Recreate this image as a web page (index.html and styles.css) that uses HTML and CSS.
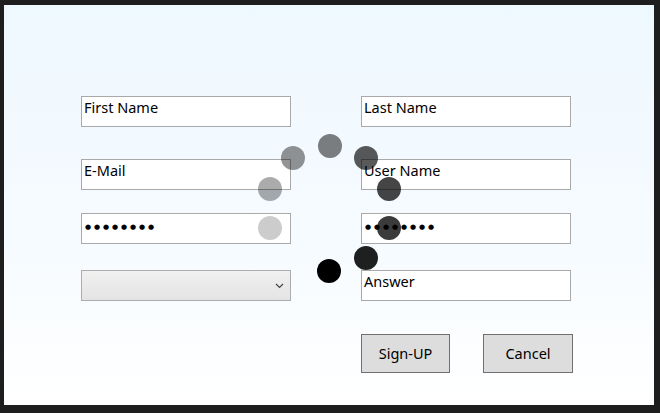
FILE: index.html
```html
<!DOCTYPE html>
<html>
<head>
<meta charset="utf-8">
<link rel="stylesheet" href="styles.css">
</head>
<body>
<div class="frame">
  <div class="panel">
    <div class="form">
      <div class="row row1">
        <div class="box">First Name</div>
        <div class="box">Last Name</div>
      </div>
      <div class="row row2">
        <div class="box">E-Mail</div>
        <div class="box">User Name</div>
      </div>
      <div class="row row3">
        <div class="box pw">●●●●●●●●</div>
        <div class="box pw">●●●●●●●●</div>
      </div>
      <div class="row row4">
        <div class="combo">
          <svg class="chev" width="9" height="6" viewBox="0 0 9 6"><polyline points="1,1 4.5,4.5 8,1" fill="none" stroke="#444" stroke-width="1.2"/></svg>
        </div>
        <div class="box">Answer</div>
      </div>
      <div class="row buttons">
        <div class="btn signup">Sign-UP</div>
        <div class="btn cancel">Cancel</div>
      </div>
    </div>
    <div class="dot" style="left:314px;top:129px;background:rgba(0,0,0,0.5)"></div>
    <div class="dot" style="left:277px;top:141px;background:rgba(0,0,0,0.42)"></div>
    <div class="dot" style="left:350px;top:141px;background:rgba(0,0,0,0.65)"></div>
    <div class="dot" style="left:254px;top:172px;background:rgba(0,0,0,0.33)"></div>
    <div class="dot" style="left:373px;top:172px;background:rgba(0,0,0,0.73)"></div>
    <div class="dot" style="left:254px;top:211px;background:rgba(0,0,0,0.2)"></div>
    <div class="dot" style="left:373px;top:211px;background:rgba(0,0,0,0.77)"></div>
    <div class="dot" style="left:350px;top:241px;background:rgba(0,0,0,0.88)"></div>
    <div class="dot" style="left:313px;top:254px;background:rgba(0,0,0,1)"></div>
  </div>
</div>
</body>
</html>
```

FILE: styles.css
```css
* { box-sizing: border-box; }
html, body { margin: 0; padding: 0; }
body {
  width: 660px;
  height: 413px;
  background: #1e1e1e;
  font-family: "Noto Sans", "Open Sans", sans-serif;
  font-size: 14px;
  color: #000;
  overflow: hidden;
}
.frame {
  width: 660px;
  height: 413px;
  padding: 5px 6px 8px 4px;
}
.panel {
  position: relative;
  width: 100%;
  height: 100%;
  background: linear-gradient(to bottom, #eef8ff 0%, #f6fbff 60%, #ffffff 100%);
  overflow: hidden;
}
.form {
  padding: 91px 0 0 77px;
  display: flex;
  flex-direction: column;
}
.row {
  display: flex;
  gap: 70px;
}
.row2 { margin-top: 32px; }
.row3 { margin-top: 23px; }
.row4 { margin-top: 26px; }
.buttons { margin-top: 33px; padding-left: 280px; gap: 33px; }
.box {
  width: 210px;
  height: 31px;
  background: #fff;
  border: 1px solid #a9a9a9;
  padding: 1px 0 0 2px;
  line-height: 18px;
  font-size: 14.5px;
  white-space: nowrap;
}
.pw {
  font-family: "DejaVu Sans", sans-serif;
  font-size: 7px;
  letter-spacing: 2.9px;
  line-height: 27px;
  padding-top: 0;
  padding-left: 3px;
}
.combo {
  width: 210px;
  height: 31px;
  border: 1px solid #acacac;
  background: linear-gradient(to bottom, #f0f0f0, #e4e4e4);
  display: flex;
  align-items: center;
  justify-content: flex-end;
  padding-right: 6px;
}
.chev { display: block; margin-top: 1px; }
.btn {
  height: 39px;
  background: #dddddd;
  border: 1px solid #707070;
  display: flex;
  align-items: center;
  justify-content: center;
  padding-bottom: 1px;
  font-size: 14.5px;
}
.signup { width: 89px; }
.cancel { width: 90px; }
.dot {
  position: absolute;
  width: 24px;
  height: 24px;
  border-radius: 50%;
}
```
